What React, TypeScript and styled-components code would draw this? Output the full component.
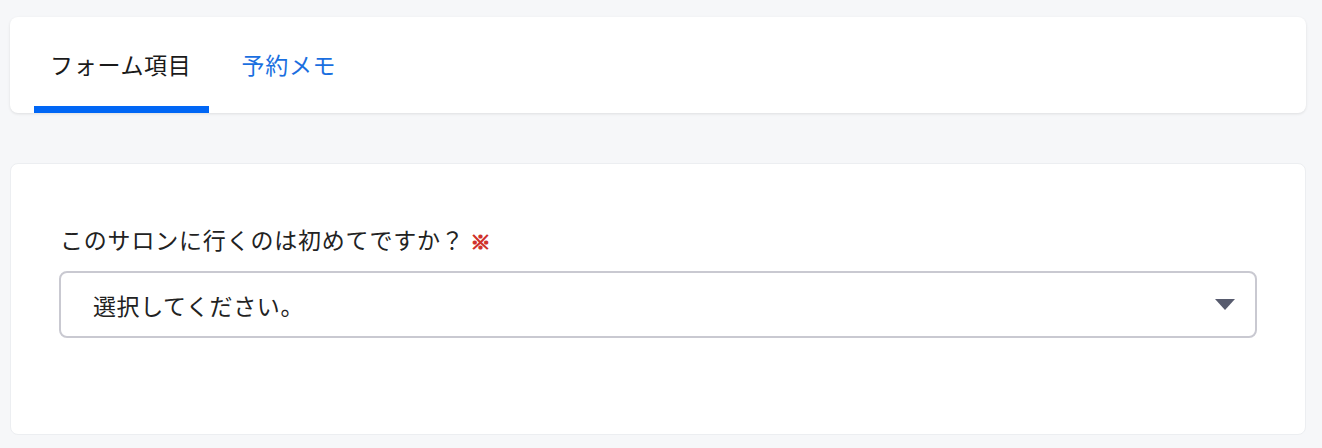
import React, { useState } from "react";
import styled, { createGlobalStyle } from "styled-components";

const GlobalStyle = createGlobalStyle`
  html, body {
    margin: 0;
    padding: 0;
    background: #f6f7f9;
    font-family: "Noto Sans CJK JP", "Noto Sans", sans-serif;
    color: #222;
  }
`;

const Page = styled.div`
  padding: 17px 16px 14px 10px;
  display: flex;
  flex-direction: column;
  gap: 50px;
`;

const TabCard = styled.nav`
  background: #fff;
  border-radius: 8px;
  box-shadow: 0 1px 3px rgba(0, 0, 0, 0.1);
  height: 96px;
  display: flex;
  align-items: stretch;
  padding-left: 24px;
  gap: 17px;
  overflow: hidden;
`;

const Tab = styled.button<{ $active: boolean }>`
  border: none;
  background: none;
  padding: 0 17px 2px 16px;
  font-family: inherit;
  font-size: 23px;
  letter-spacing: 0.7px;
  cursor: pointer;
  color: ${(p) => (p.$active ? "#1a1a1a" : "#1a6fe0")};
  box-shadow: ${(p) => (p.$active ? "inset 0 -7px 0 #0066f5" : "none")};
  display: flex;
  align-items: center;
`;

const FormCard = styled.section`
  background: #fff;
  border: 1px solid #eceef1;
  border-radius: 8px;
  padding: 58px 48px 96px 48px;
`;

const Label = styled.label`
  display: flex;
  align-items: center;
  font-size: 23px;
  letter-spacing: 0.8px;
  color: #222;
  margin-bottom: 15px;
  padding-left: 1px;
`;

const Required = styled.span`
  color: #d0312a;
  font-size: 20px;
  font-weight: 700;
  -webkit-text-stroke: 1.2px #d0312a;
  margin-left: 6px;
  margin-top: 4px;
`;

const SelectBox = styled.div`
  height: 63px;
  border: 2px solid #c9c9d1;
  border-radius: 8px;
  display: flex;
  align-items: center;
  justify-content: space-between;
  padding: 0 20px 0 32px;
  font-size: 23px;
  letter-spacing: 0.6px;
  color: #222;
`;

const Caret = styled.span`
  width: 0;
  height: 0;
  border-left: 10px solid transparent;
  border-right: 10px solid transparent;
  border-top: 11px solid #575b6e;
`;

export default function App() {
  const [tab, setTab] = useState(0);
  const tabs = ["フォーム項目", "予約メモ"];
  return (
    <>
      <GlobalStyle />
      <Page>
        <TabCard>
          {tabs.map((t, i) => (
            <Tab key={t} $active={tab === i} onClick={() => setTab(i)}>
              {t}
            </Tab>
          ))}
        </TabCard>
        <FormCard>
          <Label>
            このサロンに行くのは初めてですか？
            <Required>※</Required>
          </Label>
          <SelectBox>
            <span>選択してください。</span>
            <Caret />
          </SelectBox>
        </FormCard>
      </Page>
    </>
  );
}
